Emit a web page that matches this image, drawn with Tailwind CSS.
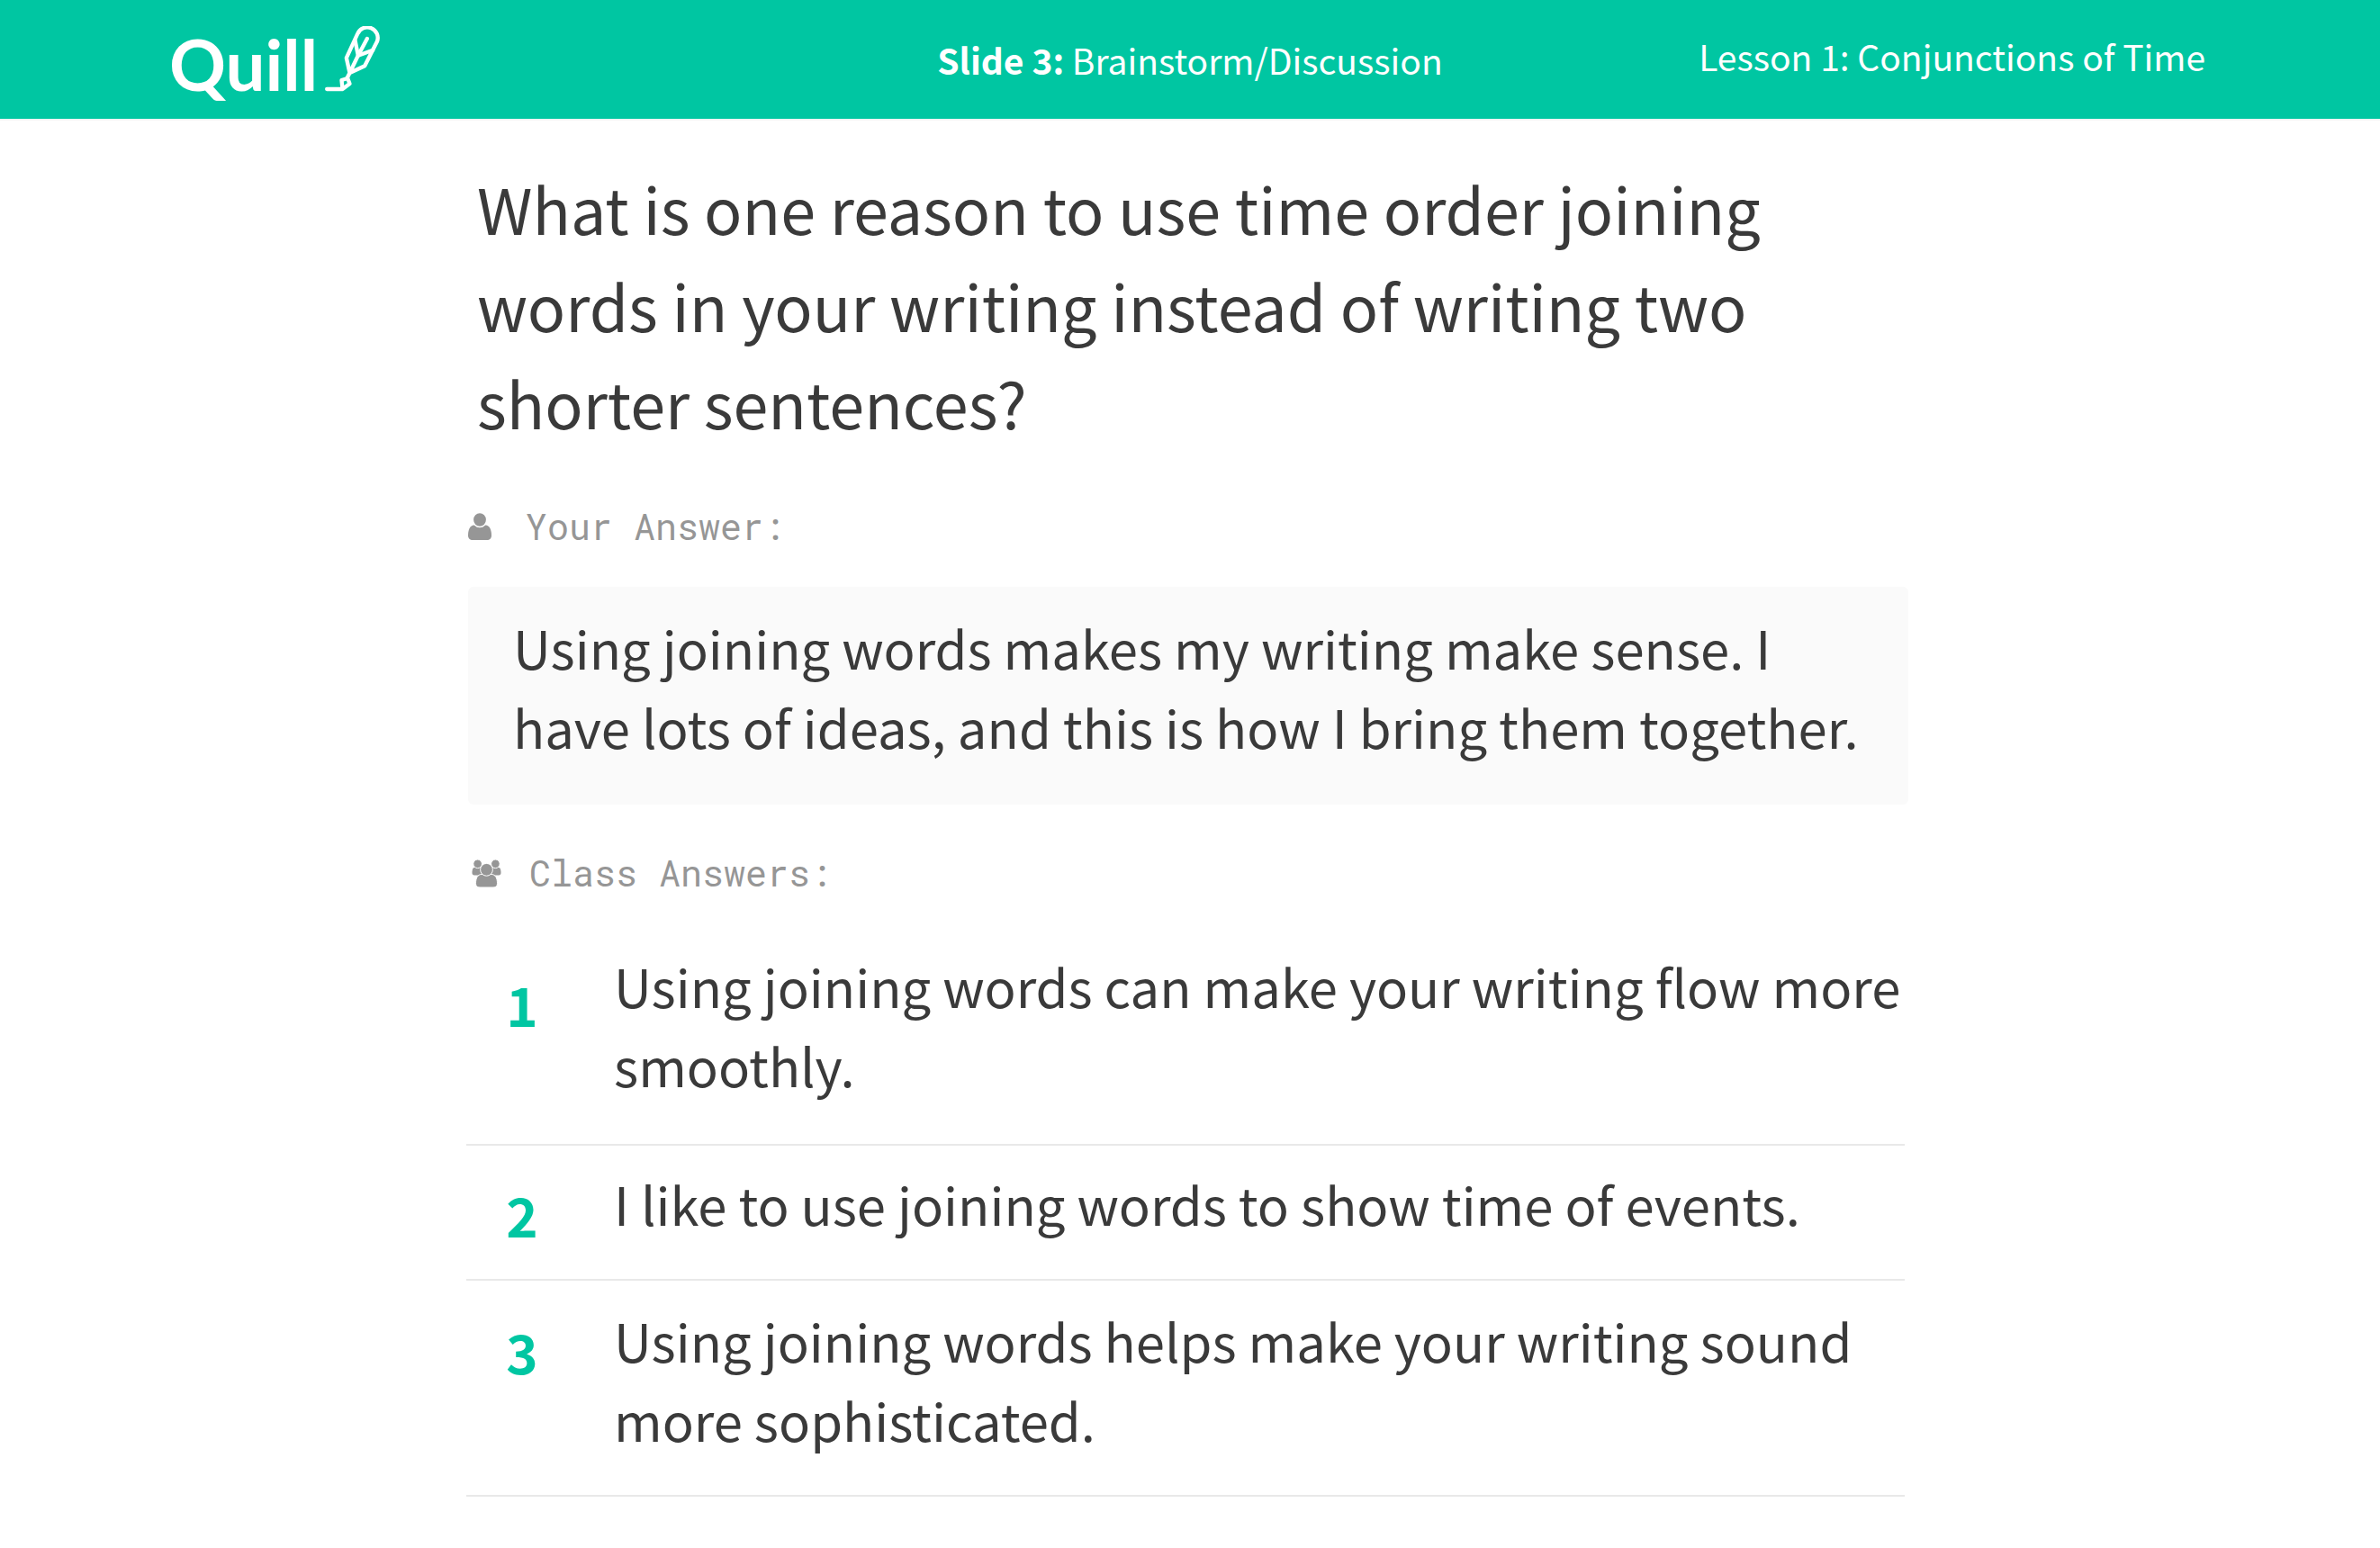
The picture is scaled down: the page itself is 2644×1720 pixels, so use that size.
<!DOCTYPE html>
<html lang="en">
<head>
<meta charset="utf-8">
<title>Quill – Conjunctions of Time</title>
<script src="https://cdn.jsdelivr.net/npm/@tailwindcss/browser@4"></script>
</head>
<body class="min-h-screen bg-white font-['Noto_Sans_CJK_SC',sans-serif] text-[#3a3a3a]">
<header class="grid h-[134px] grid-cols-[1fr_auto_1fr] items-center border-b-2 border-[#f7f5f5] bg-[#00c6a2] px-[190px] text-[39px] leading-[48px] text-white">
  <a href="#" class="-ml-0.5 flex items-center gap-2 justify-self-start">
    <span class="pt-[10px] font-['Lato',sans-serif] text-[78px] leading-[76px] font-bold">Quill</span>
    <svg class="h-[74px] w-[61px]" viewBox="0 0 182 222" fill="none" stroke="currentColor" stroke-width="13" stroke-linecap="round" stroke-linejoin="round" aria-hidden="true">
      <g transform="translate(30 -24)">
        <path d="M-24 234H28L52 216L45 198L25 204L28 234"/>
        <path d="M43 198L52 180L41 130L78 50A35 35 0 0 1 143 76L102 157L52 180L80 122L110 66"/>
        <path d="M70 72L80 122L129 104"/>
      </g>
    </svg>
  </a>
  <p><strong class="font-bold">Slide 3:</strong> Brainstorm/Discussion</p>
  <p class="justify-self-end pr-1 pb-2">Lesson 1: Conjunctions of Time</p>
</header>

<main class="mx-auto max-w-[1604px] pt-[43px] pr-1">
  <h1 class="pl-[10px] text-[70px] leading-[108px]">What is one reason to use time order joining words in your writing instead of writing two shorter sentences?</h1>

  <section>
    <h2 class="mt-[60px] flex items-center gap-[38px] font-['Roboto_Mono','Liberation_Mono',monospace] text-[40px] leading-[48px] text-[#969696]">
      <svg class="h-[30px] w-[26px]" viewBox="0 0 26 30" fill="currentColor" aria-hidden="true">
        <path d="M6 13.5C2 14 0 19 0 25C0 28 2 30 5 30H21C24 30 26 28 26 25C26 19 24 14 20 13.5Z"/>
        <ellipse cx="13" cy="7.5" rx="7.6" ry="8" stroke="white" stroke-width="1.4"/>
      </svg>
      Your Answer:
    </h2>
    <p class="mt-[43px] rounded-md bg-[#fafafa] px-[50px] pt-[23px] pb-[43px] text-[58px] leading-[88px]">Using joining words makes my writing make sense. I have lots of ideas, and this is how I bring them together.</p>
  </section>

  <section>
    <h2 class="mt-[52px] flex items-center gap-[31px] pl-1 font-['Roboto_Mono','Liberation_Mono',monospace] text-[40px] leading-[48px] text-[#969696]">
      <svg class="h-[31px] w-[33px]" viewBox="0 0 33 31" fill="currentColor" aria-hidden="true">
        <path d="M3 9C1 9 0.5 12 0.5 15C0.5 17 2 17.5 4 17.5H12V9Z"/>
        <path d="M30 9C32 9 32.5 12 32.5 15C32.5 17 31 17.5 29 17.5H21V9Z"/>
        <g stroke="white" stroke-width="1">
          <circle cx="6.6" cy="4.8" r="4.8"/>
          <circle cx="26.4" cy="4.8" r="4.8"/>
          <path d="M11 16.5C6.500 16.500 4.500 21 4.500 26.500C4.500 29.500 6 31 9 31H24C27 31 28.500 29.500 28.500 26.500C28.500 21 26.500 16.500 22 16.500Z"/>
          <circle cx="16.500" cy="11.300" r="6.900"/>
        </g>
      </svg>
      Class Answers:
    </h2>
    <ol class="mt-[37px] mr-1 -ml-0.5 text-[58px] leading-[88px]">
      <li class="flex gap-10 border-b-2 border-[#e9e9e9] pt-5 pb-11">
        <span class="w-[124px] shrink-0 pt-5 text-center text-[60px] font-bold text-[#00c6a2]">1</span>
        <p>Using joining words can make your writing flow more smoothly.</p>
      </li>
      <li class="flex gap-10 border-b-2 border-[#e9e9e9] pt-5">
        <span class="w-[124px] shrink-0 pt-3 text-center text-[60px] font-bold text-[#00c6a2]">2</span>
        <p class="pb-10">I like to use joining words to show time of events.</p>
      </li>
      <li class="flex gap-10 border-b-2 border-[#e9e9e9] pt-[22px]">
        <span class="w-[124px] shrink-0 pt-3 text-center text-[60px] font-bold text-[#00c6a2]">3</span>
        <p class="pb-10">Using joining words helps make your writing sound more sophisticated.</p>
      </li>
    </ol>
  </section>
</main>
</body>
</html>
